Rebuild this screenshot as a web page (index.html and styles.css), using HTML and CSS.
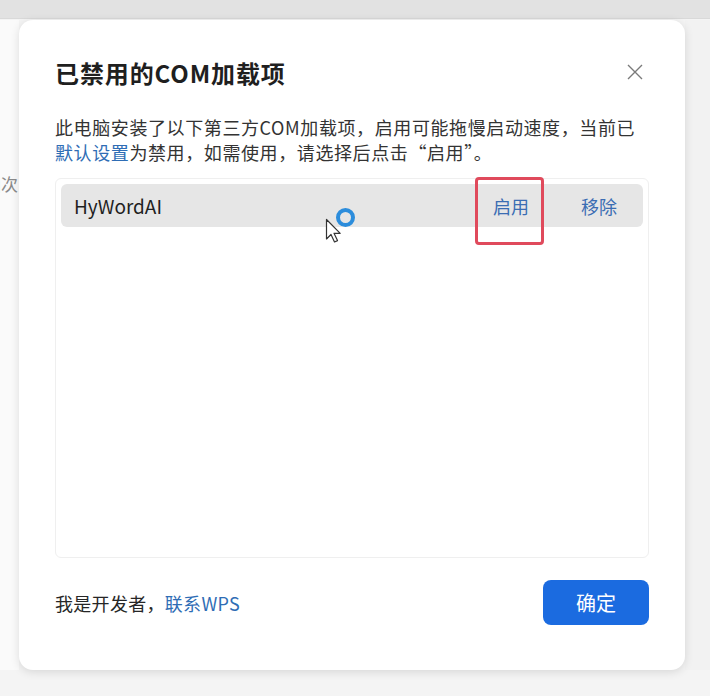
FILE: index.html
```html
<!DOCTYPE html>
<html lang="zh-CN">
<head>
  <meta charset="UTF-8">
  <title>已禁用的COM加载项</title>
  <link rel="stylesheet" href="styles.css">
</head>
<body>
  <div class="topbar"></div>
  <div class="stage">
    <div class="side"><span>前函次</span></div>
    <div class="dialog">
      <div class="head">
        <h2>已禁用的COM加载项</h2>
        <button class="close" aria-label="关闭">
          <svg width="16" height="16" viewBox="0 0 16 16"><path d="M1 1L15 15M15 1L1 15" stroke="#7a7a7a" stroke-width="1.4" fill="none"/></svg>
        </button>
      </div>
      <p class="desc">此电脑安装了以下第三方COM加载项，启用可能拖慢启动速度，当前已<br><a class="link">默认设置</a>为禁用，如需使用，请选择后点击“启用”。</p>
      <div class="list">
        <div class="row">
          <span class="name">HyWordAI</span>
          <span class="act act-on">启用</span>
          <span class="act">移除</span>
          <!-- 鼠标与加载圈 -->
          <div class="pointer">
            <svg width="18" height="26" viewBox="0 0 18 26"><path d="M1.5 1.5V21L6 16.5L9.5 24L12.5 22.6L9 15.3H15.2Z" fill="#fff" stroke="#333" stroke-width="1.2" stroke-linejoin="round"/></svg>
            <span class="ring"></span>
          </div>
        </div>
      </div>
      <div class="foot">
        <span class="dev">我是开发者，<a class="link">联系WPS</a></span>
        <button class="ok">确定</button>
      </div>
    </div>
    <div class="rest"></div>
  </div>
</body>
</html>
```

FILE: styles.css
```css
body{
  margin: 0;
  background: #f4f4f4;
  font-family: "Noto Sans CJK SC", "Noto Sans", sans-serif;
  color: #262626;
  height: 696px;
  overflow: hidden;
}
.topbar{
  height: 18px;
  background: #e2e2e2;
  border-bottom: 1px solid #d9d9d9;
}
.stage{
  display: flex;
  padding-top: 1px;
}
.side{
  width: 19px;
  height: 650px;
  background: #fafafa;
  overflow: hidden;
  display: flex;
  justify-content: flex-end;
  padding-top: 151px;
  padding-right: 1px;
  box-sizing: border-box;
  color: #8a8a8a;
  font-size: 17px;
  white-space: nowrap;
}
.side span{
  flex: none;
}
.rest{
  flex: 1;
  height: 650px;
  background: #f2f2f2;
}
.dialog{
  width: 666px;
  height: 650px;
  box-sizing: border-box;
  background: #fff;
  border-radius: 14px;
  box-shadow: 0 2px 10px rgba(0,0,0,0.12);
  padding: 0 36px 0 36px;
  display: flex;
  flex-direction: column;
  position: relative;
  z-index: 1;
}
.head{
  display: flex;
  align-items: center;
  justify-content: space-between;
  height: 58px;
  margin-top: 23px;
}
.head h2{
  margin: 0;
  font-size: 24px;
  font-weight: 700;
  color: #1f1f1f;
  letter-spacing: 0.9px;
}
.close{
  border: 0;
  background: none;
  padding: 0;
  width: 18px;
  height: 18px;
  margin-right: 5px;
  display: flex;
  align-items: center;
  justify-content: center;
}
.desc{
  margin: 14px 0 0 0;
  font-size: 18px;
  line-height: 25px;
  color: #333;
  white-space: nowrap;
  letter-spacing: 0.6px;
}
.link{
  color: #2f6db5;
}
.list{
  margin-top: 13px;
  height: 380px;
  border: 1px solid #efefef;
  border-radius: 6px;
  padding: 5px;
  box-sizing: border-box;
}
.row{
  height: 43px;
  background: #e6e6e6;
  border-radius: 6px;
  display: flex;
  align-items: center;
  padding-left: 13px;
  position: relative;
  font-size: 19px;
}
.name{
  flex: 1;
  color: #1f1f1f;
}
.act{
  color: #3b6db3;
  font-size: 18px;
  margin-right: 26px;
}
.act-on{
  margin-right: 52px;
  position: relative;
}
.act-on::after{
  content: "";
  position: absolute;
  left: -18px;
  top: -16px;
  width: 63px;
  height: 62px;
  border: 3px solid #e04a5c;
  border-radius: 4px;
}
.pointer{
  position: absolute;
  left: 264px;
  top: 34px;
}
.ring{
  position: absolute;
  left: 11px;
  top: -10px;
  width: 11px;
  height: 11px;
  border: 4px solid #2c8ddc;
  border-radius: 50%;
}
.foot{
  display: flex;
  align-items: center;
  justify-content: space-between;
  margin-top: 22px;
}
.dev{
  font-size: 18px;
  color: #262626;
  letter-spacing: 0.3px;
}
.ok{
  width: 106px;
  height: 45px;
  border: 0;
  border-radius: 8px;
  background: #1b6be0;
  color: #fff;
  font-family: inherit;
  font-size: 20px;
}
```
